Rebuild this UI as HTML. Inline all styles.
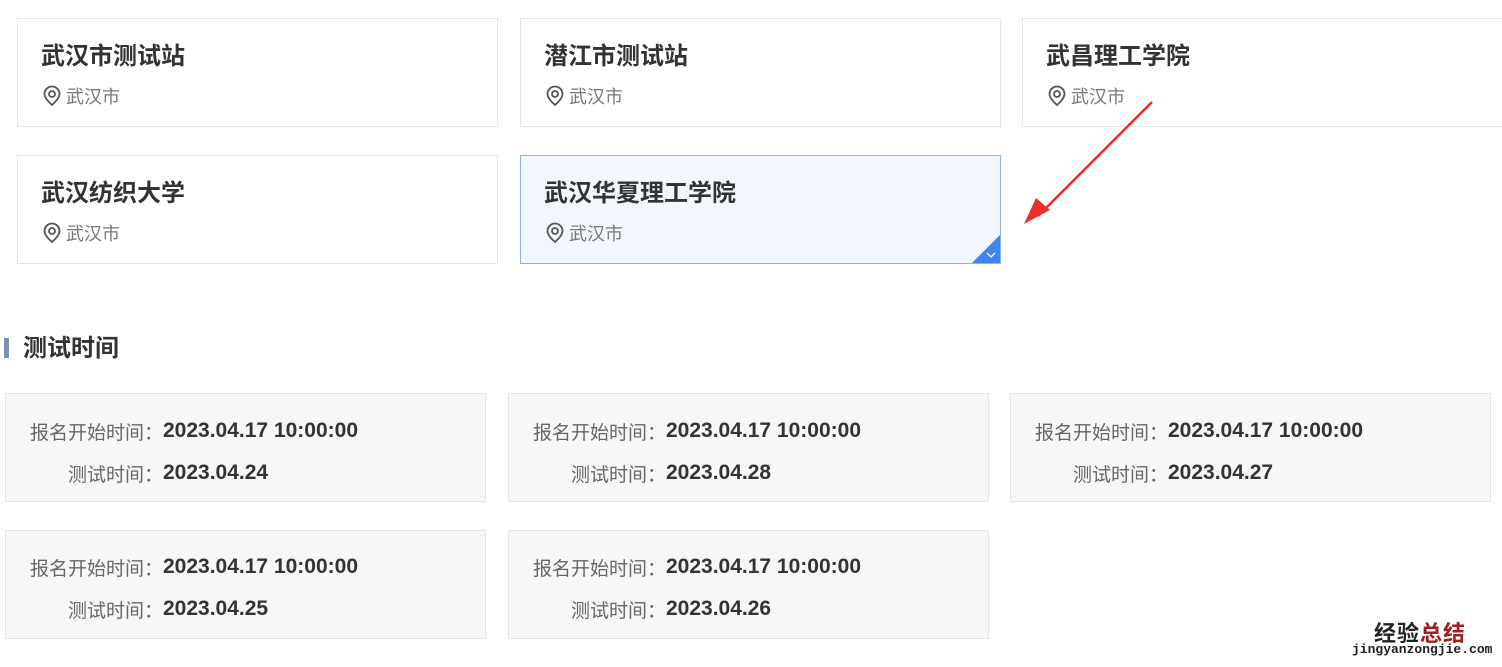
<!DOCTYPE html>
<html><head><meta charset="utf-8"><style>
*{margin:0;padding:0;box-sizing:border-box}
body{width:1502px;height:667px;background:#fff;position:relative;overflow:hidden;font-family:"Liberation Sans","Noto Sans CJK SC",sans-serif}
.c{position:absolute;border:1px solid #e6e6e6;background:#fff;height:109px;width:481px}
.c.sel{background:#f2f6fd;border-color:#8fb0ea}
.t{position:absolute;left:23px;top:21px;font-size:24px;font-weight:bold;color:#333;line-height:34px}
.l{position:absolute;left:23px;top:64px;font-size:18px;color:#777;display:flex;align-items:center}
.l svg{margin-right:3px}
.tick{position:absolute;right:0;bottom:0;width:0;height:0;border-left:28px solid transparent;border-bottom:28px solid #3d86ef}
.tc{position:absolute;width:481px;height:109px;background:#f7f7f7;border:1px solid #e5e5e5}
.row{position:absolute;left:0;height:30px;display:flex;align-items:center}
.r{width:157px;text-align:right;font-size:19px;color:#666;white-space:nowrap}
.v{font-size:21px;font-weight:bold;color:#333;margin-left:0}
</style></head><body>
<div class="c" style="left:17px;top:18px"><div class="t">武汉市测试站</div><div class="l"><svg width="22" height="22" viewBox="0 0 22 22" fill="none" stroke="#555" stroke-width="1.8"><path d="M11 20c-4.5-4-7.5-7.5-7.5-11a7.5 7.5 0 0 1 15 0c0 3.5-3 7-7.5 11z"/><circle cx="11" cy="9" r="3"/></svg>武汉市</div></div>
<div class="c" style="left:520px;top:18px"><div class="t">潜江市测试站</div><div class="l"><svg width="22" height="22" viewBox="0 0 22 22" fill="none" stroke="#555" stroke-width="1.8"><path d="M11 20c-4.5-4-7.5-7.5-7.5-11a7.5 7.5 0 0 1 15 0c0 3.5-3 7-7.5 11z"/><circle cx="11" cy="9" r="3"/></svg>武汉市</div></div>
<div class="c" style="left:1022px;top:18px"><div class="t">武昌理工学院</div><div class="l"><svg width="22" height="22" viewBox="0 0 22 22" fill="none" stroke="#555" stroke-width="1.8"><path d="M11 20c-4.5-4-7.5-7.5-7.5-11a7.5 7.5 0 0 1 15 0c0 3.5-3 7-7.5 11z"/><circle cx="11" cy="9" r="3"/></svg>武汉市</div></div>
<div class="c" style="left:17px;top:155px"><div class="t">武汉纺织大学</div><div class="l"><svg width="22" height="22" viewBox="0 0 22 22" fill="none" stroke="#555" stroke-width="1.8"><path d="M11 20c-4.5-4-7.5-7.5-7.5-11a7.5 7.5 0 0 1 15 0c0 3.5-3 7-7.5 11z"/><circle cx="11" cy="9" r="3"/></svg>武汉市</div></div>
<div class="c sel" style="left:520px;top:155px"><div class="t">武汉华夏理工学院</div><div class="l"><svg width="22" height="22" viewBox="0 0 22 22" fill="none" stroke="#555" stroke-width="1.8"><path d="M11 20c-4.5-4-7.5-7.5-7.5-11a7.5 7.5 0 0 1 15 0c0 3.5-3 7-7.5 11z"/><circle cx="11" cy="9" r="3"/></svg>武汉市</div><div class="tick"></div><svg style="position:absolute;right:4px;bottom:4px" width="10" height="8" viewBox="0 0 10 8"><path d="M1 2l4 4 4-4" stroke="#fff" stroke-width="1.3" fill="none"/></svg></div>
<svg style="position:absolute;left:1020px;top:98px" width="140" height="130" viewBox="0 0 140 130"><path d="M132 4L18 118" stroke="#e8312a" stroke-width="2.5"/><path d="M4 126L16 100 30 112z" fill="#e8312a"/></svg>
<div style="position:absolute;left:4px;top:338px;width:5px;height:20px;background:#7a8fb5"></div>
<div style="position:absolute;left:23px;top:332px;font-size:24px;font-weight:bold;color:#333;line-height:34px">测试时间</div>
<div class="tc" style="left:5px;top:393px"><div class="row" style="top:22px"><span class="r">报名开始时间：</span><span class="v">2023.04.17 10:00:00</span></div><div class="row" style="top:64px"><span class="r">测试时间：</span><span class="v">2023.04.24</span></div></div>
<div class="tc" style="left:508px;top:393px"><div class="row" style="top:22px"><span class="r">报名开始时间：</span><span class="v">2023.04.17 10:00:00</span></div><div class="row" style="top:64px"><span class="r">测试时间：</span><span class="v">2023.04.28</span></div></div>
<div class="tc" style="left:1010px;top:393px"><div class="row" style="top:22px"><span class="r">报名开始时间：</span><span class="v">2023.04.17 10:00:00</span></div><div class="row" style="top:64px"><span class="r">测试时间：</span><span class="v">2023.04.27</span></div></div>
<div class="tc" style="left:5px;top:530px"><div class="row" style="top:21px"><span class="r">报名开始时间：</span><span class="v">2023.04.17 10:00:00</span></div><div class="row" style="top:63px"><span class="r">测试时间：</span><span class="v">2023.04.25</span></div></div>
<div class="tc" style="left:508px;top:530px"><div class="row" style="top:21px"><span class="r">报名开始时间：</span><span class="v">2023.04.17 10:00:00</span></div><div class="row" style="top:63px"><span class="r">测试时间：</span><span class="v">2023.04.26</span></div></div>
<div style="position:absolute;left:1374px;top:616px;font-size:22px;font-weight:bold;letter-spacing:1px;color:#222">经验<span style="color:#a02020">总结</span></div>
<div style="position:absolute;left:1352px;top:642px;font-size:13px;font-family:'Liberation Mono',monospace;color:#222;font-weight:bold">jingyanzongjie.com</div>
</body></html>
